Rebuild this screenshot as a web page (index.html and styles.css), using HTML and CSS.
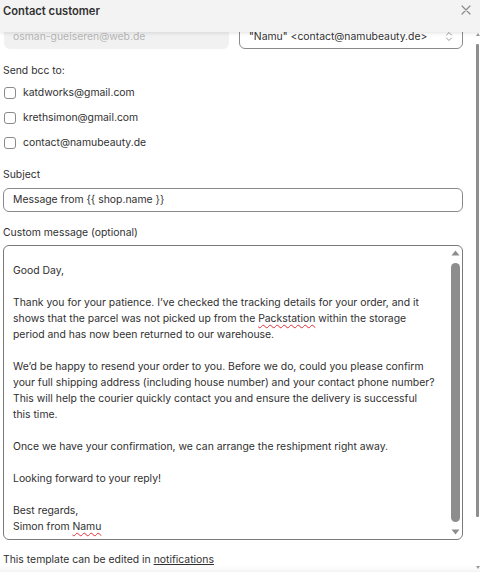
FILE: index.html
```html
<!DOCTYPE html>
<html lang="en">
<head>
<meta charset="utf-8">
<title>Contact customer</title>
<link rel="stylesheet" href="styles.css">
</head>
<body>
<div class="modal">
  <header class="modal-header">
    <h1 class="title">Contact customer</h1>
    <button class="close" aria-label="Close">
      <svg width="10" height="10" viewBox="0 0 10 10"><path d="M1 1L9 9M9 1L1 9" stroke="#8a8a8a" stroke-width="1.2" stroke-linecap="round" fill="none"/></svg>
    </button>
  </header>
  <div class="modal-body">
    <div class="content">
      <div class="row-fields">
        <div class="field field-disabled">osman-gueiseren@web.de</div>
        <div class="field select">
          <span class="select-value">"Namu" &lt;contact@namubeauty.de&gt;</span>
          <svg class="chev" width="8" height="11" viewBox="0 0 8 11"><path d="M1.5 4L4 1.5L6.5 4M1.5 7L4 9.5L6.5 7" stroke="#9a9a9a" stroke-width="1" fill="none" stroke-linecap="round" stroke-linejoin="round"/></svg>
        </div>
      </div>

      <div class="label bcc-label">Send bcc to:</div>
      <ul class="checks">
        <li class="check"><span class="box"></span><span>katdworks@gmail.com</span></li>
        <li class="check"><span class="box"></span><span>krethsimon@gmail.com</span></li>
        <li class="check"><span class="box"></span><span>contact@namubeauty.de</span></li>
      </ul>

      <div class="label subject-label">Subject</div>
      <div class="field input">Message from {{ shop.name }}</div>

      <div class="label message-label">Custom message (optional)</div>
      <div class="textarea">
        <div class="ta-text">Good Day,

Thank you for your patience. I’ve checked the tracking details for your order, and it
shows that the parcel was not picked up from the <span class="spell">Packstation</span> within the storage
period and has now been returned to our warehouse.

We’d be happy to resend your order to you. Before we do, could you please confirm
your full shipping address (including house number) and your contact phone number?
This will help the courier quickly contact you and ensure the delivery is successful
this time.

Once we have your confirmation, we can arrange the reshipment right away.

Looking forward to your reply!

Best regards,
Simon from <span class="spell">Namu</span></div>
        <div class="ta-scroll">
          <svg class="arrow" width="9" height="6" viewBox="0 0 9 6"><path d="M4.5 0.5L8.5 5.5H0.5Z" fill="#8d8d8d"/></svg>
          <div class="ta-thumb"></div>
          <svg class="arrow" width="9" height="6" viewBox="0 0 9 6"><path d="M0.5 0.5H8.5L4.5 5.5Z" fill="#8d8d8d"/></svg>
        </div>
      </div>

      <p class="help">This template can be edited in <a href="#" class="link">notifications</a></p>
    </div>
    <div class="page-scroll">
      <svg class="p-arrow" width="4" height="3" viewBox="0 0 4 3"><path d="M2 0L4 3H0Z" fill="#9a9a9a"/></svg>
      <div class="p-thumb"></div>
      <svg class="p-arrow" width="4" height="3" viewBox="0 0 4 3"><path d="M0 0H4L2 3Z" fill="#9a9a9a"/></svg>
    </div>
  </div>
</div>
</body>
</html>
```

FILE: styles.css
```css
* { box-sizing: border-box; }
html, body { margin: 0; padding: 0; }
body {
  width: 480px;
  height: 572px;
  overflow: hidden;
  background: #ffffff;
  font-family: Inter, "Noto Sans", "Liberation Sans", sans-serif;
  font-size: 10.4px;
  line-height: 16px;
  color: #303030;
}
.modal {
  display: flex;
  flex-direction: column;
  height: 572px;
}
.modal-header {
  position: relative;
  z-index: 2;
  height: 32px;
  flex: none;
  display: flex;
  align-items: flex-start;
  justify-content: space-between;
  padding: 3px 9px 0 3px;
  background: #f3f3f3;
  box-shadow: 0 1px 4px rgba(0, 0, 0, 0.12);
}
.title {
  margin: 0;
  font-size: 11.2px;
  font-weight: 600;
  line-height: 16px;
  color: #303030;
}
.close {
  border: 0;
  background: none;
  padding: 0;
  margin-top: 2px;
  width: 10px;
  height: 10px;
  display: flex;
}
.modal-body {
  flex: 1;
  display: flex;
  overflow: hidden;
  box-shadow: inset 0 -7px 7px -6px rgba(0, 0, 0, 0.08);
}
.content {
  flex: 1;
  min-width: 0;
  padding: 0 11px 0 3px;
}
.row-fields {
  display: flex;
  gap: 10px;
  margin-top: -8px;
}
.field {
  height: 25px;
  border-radius: 6px;
  display: flex;
  align-items: center;
  padding: 0 9px;
  white-space: nowrap;
}
.field-disabled {
  flex: none;
  width: 225px;
  margin-left: 1px;
  background: #f1f1f1;
  color: #b5b5b5;
}
.select {
  flex: 1;
  border: 1px solid #8a8a8a;
  justify-content: space-between;
  padding-right: 9px;
}
.chev { flex: none; }
.label {
  line-height: 16px;
}
.bcc-label { margin-top: 14px; }
.checks {
  list-style: none;
  margin: 6px 0 0;
  padding: 0;
  display: flex;
  flex-direction: column;
  gap: 9px;
}
.check {
  display: flex;
  align-items: center;
  gap: 7px;
  height: 16px;
}
.box {
  width: 12px;
  height: 12px;
  margin-left: 1px;
  border: 1px solid #8a8a8a;
  border-radius: 3px;
  background: #fff;
  flex: none;
}
.subject-label { margin-top: 16px; }
.input {
  margin-top: 5px;
  border: 1px solid #8a8a8a;
  height: 24px;
}
.message-label { margin-top: 13px; }
.textarea {
  margin-top: 4px;
  height: 295px;
  border: 1px solid #7a7a7a;
  border-radius: 6px;
  display: flex;
  overflow: hidden;
}
.ta-text {
  flex: 1;
  padding: 17px 0 0 9px;
  white-space: pre;
  line-height: 16px;
}
.spell {
  text-decoration: underline wavy #e0303a;
  text-decoration-thickness: 1px;
  text-underline-offset: 2px;
}
.ta-scroll {
  flex: none;
  width: 12px;
  display: flex;
  flex-direction: column;
  align-items: center;
  padding: 4px 2px 4px 1px;
}
.arrow { flex: none; display: block; }
.ta-thumb {
  flex: 1;
  width: 9px;
  margin: 7px 0;
  border-radius: 5px;
  background: #8d8d8d;
}
.help {
  margin: 12px 0 0;
  line-height: 16px;
}
.link {
  color: #303030;
  text-decoration: underline;
}
.page-scroll {
  flex: none;
  width: 6px;
  display: flex;
  flex-direction: column;
  align-items: center;
  padding: 1px 0 3px 1px;
}
.p-arrow { flex: none; display: block; }
.p-thumb {
  flex: 1;
  width: 3px;
  margin: 8px 0 49px;
  background: #8e8e8e;
  border-radius: 1px;
}
```
